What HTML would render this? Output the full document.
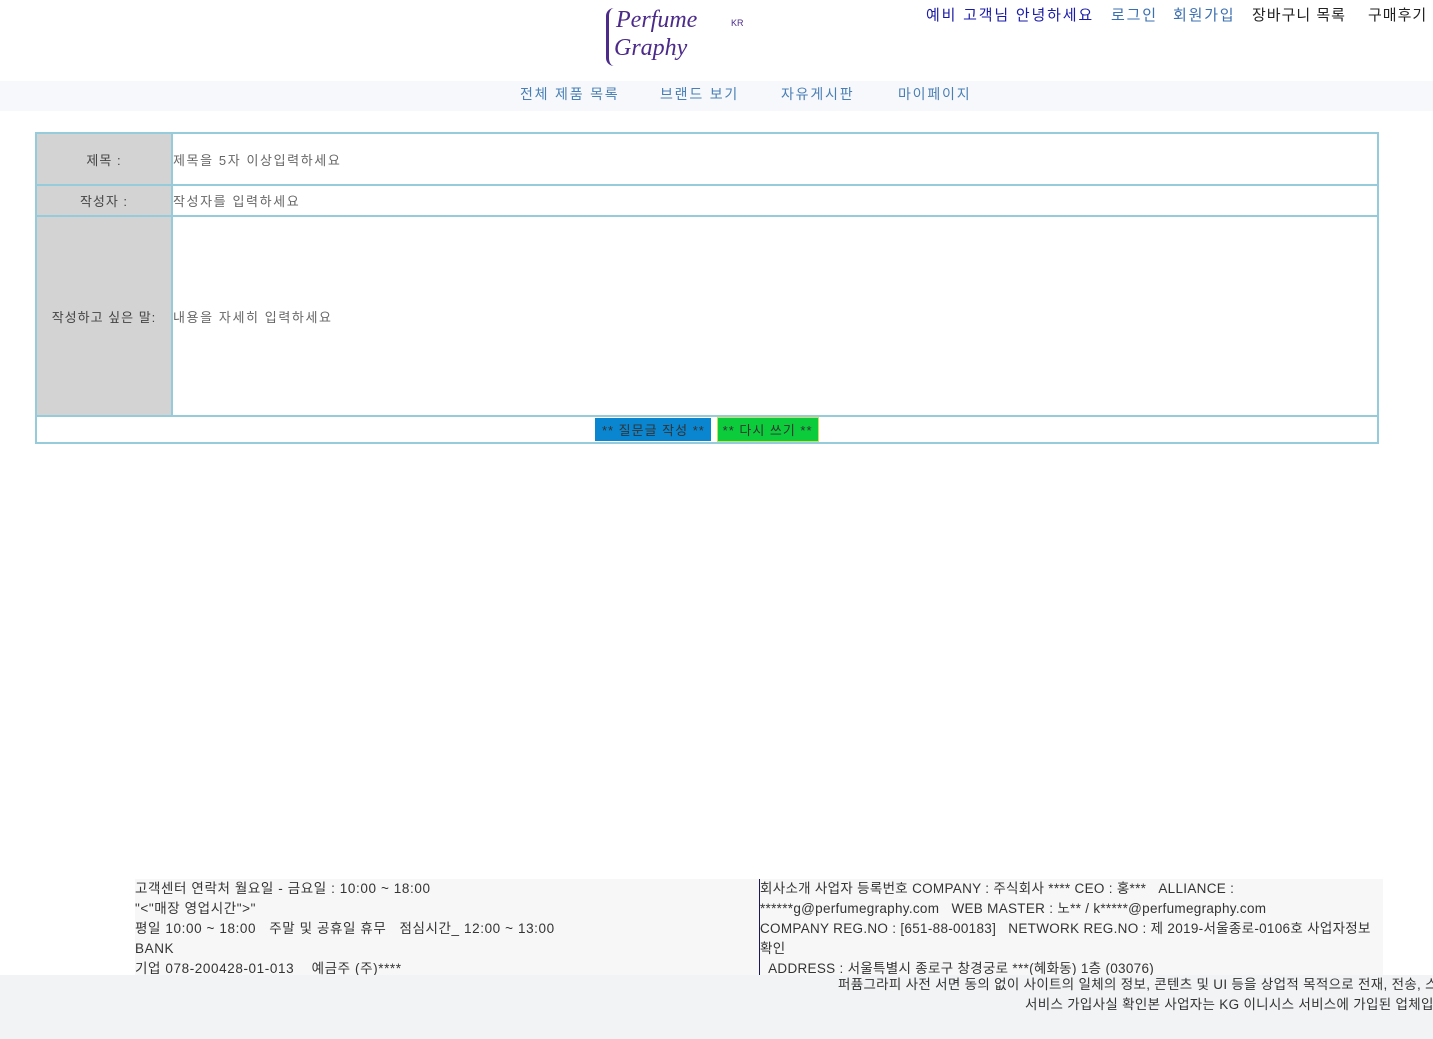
<!DOCTYPE html>
<html><head><meta charset="utf-8"><style>
*{margin:0;padding:0;box-sizing:border-box}
html,body{width:1433px;height:1039px;overflow:hidden;background:#fff;font-family:"Liberation Sans","Noto Sans CJK KR",sans-serif;position:relative}
.a{position:absolute;white-space:nowrap}
.top{font-size:15px;top:4px;letter-spacing:1.8px}
.nav{left:0;top:81px;width:1433px;height:30px;background:#f6f8fc}
.nav span{position:absolute;top:3px;font-size:14px;color:#4a7fb5;letter-spacing:1.8px}
table{position:absolute;left:35px;top:132px;width:1344px;border-collapse:collapse;border:2px solid #96cbdc}
td{border:2px solid #96cbdc;font-size:13px;color:#555;letter-spacing:1.6px}
td.l{background:#d3d3d3;text-align:center;width:136px;color:#444;letter-spacing:1px}
td.v{padding-left:0;color:#666}
.btn{display:inline-block;font-size:13px;padding:2px 0;color:#333;text-align:center;letter-spacing:1px}
.foot{font-size:13.5px;color:#333;line-height:20px;letter-spacing:0.3px}
.clip{position:absolute;left:0;top:0;width:1433px;height:1039px;overflow:hidden}
</style></head><body><div class="clip">
<div class="a" style="left:614px;top:6px;font-family:'Liberation Serif',serif;font-style:italic;color:#4b2a8a;font-size:24px;line-height:28px">
<div style="margin-left:2px">Perfume</div><div>Graphy</div></div>
<div class="a" style="left:606px;top:8px;width:8px;height:58px;border-left:3px solid #4b2a8a;border-radius:10px 0 0 10px"></div>
<div class="a" style="left:731px;top:18px;font-size:9px;color:#4b2a8a">KR</div>
<div class="a top" style="left:926px;color:#1a1aa8">예비 고객님 안녕하세요</div>
<div class="a top" style="left:1111px;color:#3a6fb0">로그인</div>
<div class="a top" style="left:1173px;color:#3a6fb0">회원가입</div>
<div class="a top" style="left:1252px;color:#222;letter-spacing:1px">장바구니 목록</div>
<div class="a top" style="left:1368px;color:#222;letter-spacing:1px">구매후기</div>
<div class="a nav"><span style="left:520px">전체 제품 목록</span><span style="left:660px">브랜드 보기</span><span style="left:781px">자유게시판</span><span style="left:898px">마이페이지</span></div>
<table>
<tr style="height:52px"><td class="l">제목 :</td><td class="v">제목을 5자 이상입력하세요</td></tr>
<tr style="height:31px"><td class="l">작성자 :</td><td class="v">작성자를 입력하세요</td></tr>
<tr style="height:200px"><td class="l">작성하고 싶은 말:</td><td class="v">내용을 자세히 입력하세요</td></tr>
<tr style="height:25px"><td colspan="2" style="text-align:center;padding-top:0"><span class="btn" style="background:#0a86d0;width:116px">** 질문글 작성 **</span> <span class="btn" style="background:#0ccc3c;border:1px solid #c8e060;width:102px">** 다시 쓰기 **</span></td></tr>
</table>
<div class="a" style="left:135px;top:879px;width:1248px;height:96px;background:#f7f7f7"></div>
<div class="a" style="left:759px;top:879px;width:1px;height:96px;background:#1a1a5a"></div>
<div class="a foot" style="left:135px;top:879px;letter-spacing:0.6px">고객센터 연락처 월요일 - 금요일 : 10:00 ~ 18:00<br>"&lt;"매장 영업시간"&gt;"<br>평일 10:00 ~ 18:00 &nbsp; 주말 및 공휴일 휴무 &nbsp; 점심시간_ 12:00 ~ 13:00<br>BANK<br>기업 078-200428-01-013 &nbsp;&nbsp; 예금주 (주)****</div>
<div class="a foot" style="left:760px;top:879px">회사소개 사업자 등록번호 COMPANY : 주식회사 **** CEO : 홍*** &nbsp; ALLIANCE :<br>******g@perfumegraphy.com &nbsp; WEB MASTER : 노** / k*****@perfumegraphy.com<br>COMPANY REG.NO : [651-88-00183] &nbsp; NETWORK REG.NO : 제 2019-서울종로-0106호 사업자정보<br>확인<br>&nbsp; ADDRESS : 서울특별시 종로구 창경궁로 ***(혜화동) 1층 (03076)</div>
<div class="a" style="left:0;top:975px;width:1433px;height:64px;background:#f1f3f4"></div>
<div class="a foot" style="left:838px;top:975px;width:595px;overflow:hidden">퍼퓸그라피 사전 서면 동의 없이 사이트의 일체의 정보, 콘텐츠 및 UI 등을 상업적 목적으로 전재, 전송, 스크래핑 등 무단 사용할 수 없습니다.</div>
<div class="a foot" style="left:1025px;top:995px;width:408px;overflow:hidden">서비스 가입사실 확인본 사업자는 KG 이니시스 서비스에 가입된 업체입니다.</div>
</div></body></html>
